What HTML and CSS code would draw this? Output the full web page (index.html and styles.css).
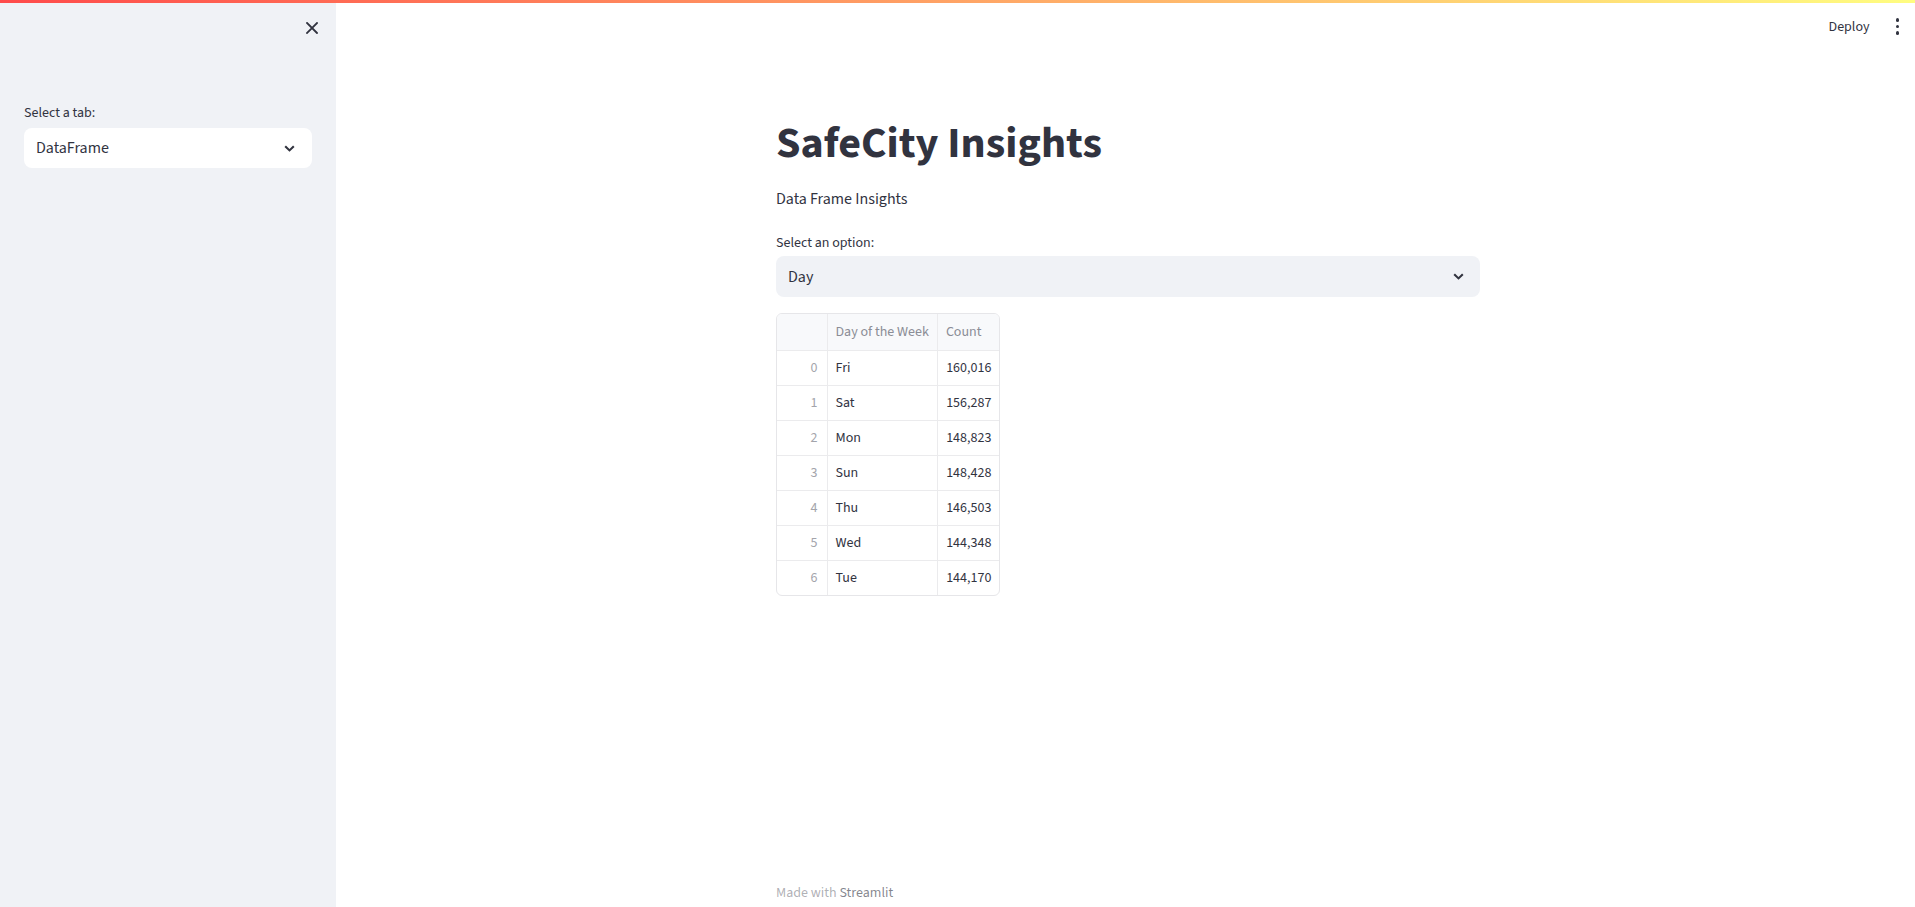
FILE: index.html
```html
<!DOCTYPE html>
<html lang="en">
<head>
<meta charset="utf-8">
<title>SafeCity Insights</title>
<link rel="stylesheet" href="styles.css">
</head>
<body>
<div class="decoration"></div>
<div class="app">
  <aside class="sidebar">
    <div class="sidebar-header">
      <button class="icon-btn close-btn" aria-label="Close sidebar">
        <svg width="12" height="12" viewBox="0 0 12 12"><path d="M1 1 L11 11 M11 1 L1 11" stroke="#31333F" stroke-width="1.8" stroke-linecap="square"/></svg>
      </button>
    </div>
    <div class="sidebar-content">
      <div class="widget-label sidebar-label">Select a tab:</div>
      <div class="select select-white">
        <span class="select-value">DataFrame</span>
        <svg class="chevron" width="11" height="7" viewBox="0 0 11 7"><path d="M1.2 1.2 L5.5 5.4 L9.8 1.2" fill="none" stroke="#31333F" stroke-width="2.1"/></svg>
      </div>
    </div>
  </aside>
  <main class="main">
    <header class="topbar">
      <span class="deploy">Deploy</span>
      <span class="menu-dots" aria-label="Main menu"><i></i><i></i><i></i></span>
    </header>
    <section class="block">
      <h1 class="title">SafeCity Insights</h1>
      <p class="text">Data Frame Insights</p>
      <div class="field">
        <div class="widget-label">Select an option:</div>
        <div class="select select-main">
          <span class="select-value">Day</span>
          <svg class="chevron" width="11" height="7" viewBox="0 0 11 7"><path d="M1.2 1.2 L5.5 5.4 L9.8 1.2" fill="none" stroke="#31333F" stroke-width="2.1"/></svg>
        </div>
      </div>
      <div class="grid-wrap">
        <table class="grid">
          <thead>
            <tr><th class="idx"></th><th class="c-day">Day of the Week</th><th class="c-count">Count</th></tr>
          </thead>
          <tbody>
            <tr><td class="idx">0</td><td>Fri</td><td class="num">160,016</td></tr>
            <tr><td class="idx">1</td><td>Sat</td><td class="num">156,287</td></tr>
            <tr><td class="idx">2</td><td>Mon</td><td class="num">148,823</td></tr>
            <tr><td class="idx">3</td><td>Sun</td><td class="num">148,428</td></tr>
            <tr><td class="idx">4</td><td>Thu</td><td class="num">146,503</td></tr>
            <tr><td class="idx">5</td><td>Wed</td><td class="num">144,348</td></tr>
            <tr><td class="idx">6</td><td>Tue</td><td class="num">144,170</td></tr>
          </tbody>
        </table>
      </div>
    </section>
    <footer class="footer">Made with <span class="brand">Streamlit</span></footer>
  </main>
</div>
</body>
</html>
```

FILE: styles.css
```css
* { box-sizing: border-box; }
html, body { margin: 0; padding: 0; height: 100%; }
body {
  font-family: "Source Sans Pro", "Source Sans 3", Lato, "Noto Sans", sans-serif;
  color: #31333F;
  background: #ffffff;
  overflow: hidden;
}
.decoration {
  position: absolute;
  top: 0; left: 0; right: 0;
  height: 3px;
  background: linear-gradient(90deg, rgb(255, 75, 75), rgb(255, 253, 128));
  z-index: 10;
}
.app { display: flex; height: 100vh; }

.sidebar {
  width: 336px;
  flex: 0 0 336px;
  background: #f0f2f6;
  display: flex;
  flex-direction: column;
}
.sidebar-header {
  height: 54px;
  display: flex;
  justify-content: flex-end;
  align-items: center;
  padding-right: 12px;
  padding-top: 2px;
}
.icon-btn {
  border: 0;
  background: transparent;
  padding: 0;
  width: 24px;
  height: 24px;
  display: flex;
  align-items: center;
  justify-content: center;
  cursor: pointer;
}
.sidebar-content { padding: 47px 24px 0; }

.widget-label {
  font-size: 14px;
  height: 24px;
  line-height: 24px;
  margin-bottom: 1px;
  color: #31333F;
}
.sidebar-label { margin-bottom: 3px; }
.select {
  height: 40px;
  border-radius: 8px;
  background: #f0f2f6;
  display: flex;
  align-items: center;
  justify-content: space-between;
  padding: 0 16px 0 12px;
  font-size: 16px;
}
.select-main { height: 41px; }
.select-white { background: #ffffff; padding-right: 17px; }
.select-value { line-height: 1.6; padding-top: 2px; }
.chevron { display: block; }

.main {
  flex: 1;
  display: flex;
  flex-direction: column;
  min-width: 0;
  padding-left: 5px;
}
.topbar {
  height: 52px;
  flex: 0 0 52px;
  display: flex;
  justify-content: flex-end;
  align-items: center;
  padding: 2px 16px 0 0;
  gap: 26px;
}
.deploy { font-size: 14px; color: #31333F; line-height: 1; }
.menu-dots {
  display: flex;
  flex-direction: column;
  gap: 3px;
  margin-top: -1px;
}
.menu-dots i {
  display: block;
  width: 3.5px;
  height: 3.5px;
  border-radius: 50%;
  background: #31333F;
}

.block {
  width: 736px;
  margin: 0 auto;
  padding: 44px 16px 0;
  display: flex;
  flex-direction: column;
  gap: 16px;
}
.title {
  margin: 0;
  padding: 22px 0 0;
  font-size: 44px;
  line-height: 1.2;
  font-weight: 700;
  color: #31333F;
}
.text { margin: 0 0 3px; font-size: 16px; line-height: 1.6; }
.field { display: flex; flex-direction: column; }

.grid-wrap {
  align-self: flex-start;
  border: 1px solid #e6e6e9;
  border-radius: 6px;
  overflow: hidden;
}
.grid {
  border-collapse: collapse;
  font-size: 14px;
}
.grid th, .grid td {
  height: 35px;
  padding: 0 8px;
  border-right: 1px solid #ebebed;
  border-bottom: 1px solid #ebebed;
  text-align: left;
  white-space: nowrap;
  font-weight: 400;
}
.grid tr > :last-child { border-right: 0; }
.grid tbody tr:last-child td { border-bottom: 0; }
.grid thead th {
  background: #f8f9fb;
  color: #8b8d96;
  height: 36px;
}
.grid .idx {
  width: 50px;
  text-align: right;
  color: #a3a4ab;
  padding-right: 9px;
}
.grid .c-day { width: 110px; }
.grid .c-count { width: 62px; }
.grid .num { text-align: right; }

.footer {
  margin-top: auto;
  width: 736px;
  margin-left: auto;
  margin-right: auto;
  padding: 0 16px 3px;
  font-size: 14px;
  line-height: 22px;
  color: rgba(49, 51, 63, 0.4);
}
.footer .brand { color: rgba(49, 51, 63, 0.6); }
```
